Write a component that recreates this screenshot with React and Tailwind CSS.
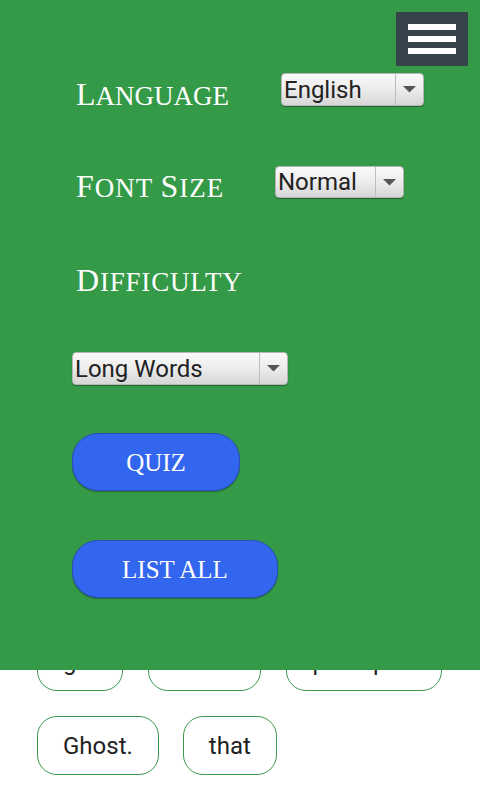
import React from 'react';

// Settings overlay on top of a word-chip list
const serif = { fontFamily: '"Liberation Serif", "DejaVu Serif", serif' };
const sans = { fontFamily: 'Roboto, "Liberation Sans", sans-serif' };

const words = [
  ['get', 'about', 'perhaps'],
  ['Ghost.', 'that'],
];

// first letter large, rest as smaller capitals
const SmallCaps = ({ parts, tracking = '' }) => (
  <div className={`h-[32px] text-white leading-[32px] whitespace-nowrap ${tracking}`} style={serif}>
    {parts.map(([first, rest], i) => (
      <React.Fragment key={i}>
        {i > 0 && <span className="text-[27px]"> </span>}
        <span className="text-[32px] leading-[32px]">{first}</span>
        <span className="text-[27px] leading-[32px] uppercase">{rest}</span>
      </React.Fragment>
    ))}
  </div>
);

const Dropdown = ({ value, width, height = 'h-[33px]' }) => (
  <div
    className={`flex items-stretch ${width} ${height} rounded-[4px] border border-[#b5b5b5] bg-gradient-to-b from-[#fafafa] via-[#ececec] to-[#d6d6d6] shadow-[0_1px_1px_rgba(0,0,0,0.35)]`}
  >
    <div className="flex-1 flex items-center pl-[2px] text-[24px] text-[#222] leading-none" style={sans}>
      {value}
    </div>
    <div className="w-[28px] border-l border-[#bdbdbd] flex items-center justify-center">
      <svg width="13" height="7" viewBox="0 0 13 7">
        <path d="M0 0 L13 0 L6.5 6.5 Z" fill="#555" />
      </svg>
    </div>
  </div>
);

const PillButton = ({ label, width }) => (
  <button
    className={`${width} h-[58px] rounded-[26px] bg-[#3366ee] border border-[#2a4fba] shadow-[0_1px_1px_rgba(0,0,0,0.3)] text-white text-[25px] leading-none flex items-center justify-center`}
    style={serif}
  >
    {label}
  </button>
);

const App = () => {
  return (
    <div className="relative w-[480px] h-[800px] overflow-hidden bg-white">
      {/* word list behind the menu */}
      <div className="pt-[632px] pl-[37px] flex flex-col gap-[25px]">
        {words.map((row, i) => (
          <div key={i} className={`flex ${i === 0 ? 'gap-[25px]' : 'gap-[24px]'}`}>
            {row.map((w) => (
              <div
                key={w}
                className={`h-[59px] px-[25px] rounded-[20px] border border-[#3a9a4a] flex items-center text-[24px] text-[#222] ${w === 'perhaps' ? 'w-[156px]' : ''}`}
                style={sans}
              >
                {w}
              </div>
            ))}
          </div>
        ))}
      </div>

      {/* settings menu overlay */}
      <div className="absolute top-0 left-0 w-full h-[670px] bg-[#349a47] pl-[72px]">
        <button className="absolute top-[12px] right-[12px] w-[72px] h-[54px] bg-[#37434b] flex flex-col items-center justify-center gap-[6px]">
          <span className="block w-[48px] h-[6px] bg-white" />
          <span className="block w-[48px] h-[6px] bg-white" />
          <span className="block w-[48px] h-[6px] bg-white" />
        </button>

        <div className="flex items-start h-[37px] mt-[73px]">
          <div className="mt-[5px] pl-[4px] w-[209px]">
            <SmallCaps parts={[['L', 'anguage']]} />
          </div>
          <Dropdown value="English" width="w-[143px]" />
        </div>

        <div className="flex items-start h-[36px] mt-[56px]">
          <div className="mt-[4px] pl-[4px] w-[203px]">
            <SmallCaps parts={[['F', 'ont'], ['S', 'ize']]} tracking="tracking-[1px]" />
          </div>
          <Dropdown value="Normal" width="w-[129px]" height="h-[32px]" />
        </div>

        <div className="mt-[62px] pl-[4px]">
          <SmallCaps parts={[['D', 'ifficulty']]} tracking="tracking-[0.8px]" />
        </div>

        <div className="mt-[56px]">
          <Dropdown value="Long Words" width="w-[216px]" />
        </div>

        <div className="mt-[48px]">
          <PillButton label="QUIZ" width="w-[168px]" />
        </div>

        <div className="mt-[49px]">
          <PillButton label="LIST ALL" width="w-[206px]" />
        </div>
      </div>
    </div>
  );
};

export default App;
